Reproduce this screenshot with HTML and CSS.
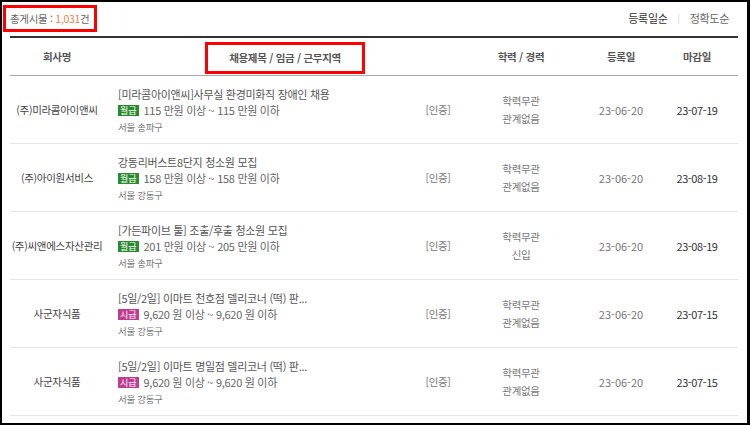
FILE: index.html
```html
<!DOCTYPE html>
<html lang="ko">
<head>
    <meta charset="UTF-8">
    <meta name="viewport" content="width=device-width, initial-scale=1.0">
    <title>채용정보</title>
    <link rel="stylesheet" href="styles.css">
</head>
<body>
    <div class="page">
        <div class="top">
            <span class="total">총게시물 : <em>1,031</em>건</span>
            <div class="sort">
                <a href="#" class="on">등록일순</a>
                <span class="bar">|</span>
                <a href="#">정확도순</a>
            </div>
        </div>

        <table class="list">
            <colgroup>
                <col class="c-company">
                <col class="c-title">
                <col class="c-cert">
                <col class="c-edu">
                <col class="c-reg">
                <col class="c-end">
            </colgroup>
            <thead>
                <tr>
                    <th>회사명</th>
                    <th colspan="2"><span class="mark">채용제목 / 임금 / 근무지역</span></th>
                    <th>학력 / 경력</th>
                    <th>등록일</th>
                    <th class="end">마감일</th>
                </tr>
            </thead>
            <tbody>
                <tr>
                    <td class="company">(주)미라콤아이앤씨</td>
                    <td class="info">
                        <div class="subject">[미라콤아이앤씨]사무실 환경미화직 장애인 채용</div>
                        <div class="pay"><span class="badge month">월급</span>115 만원 이상 ~ 115 만원 이하</div>
                        <div class="area">서울 송파구</div>
                    </td>
                    <td class="cert">[인증]</td>
                    <td class="edu">학력무관<br>관계없음</td>
                    <td class="reg">23-06-20</td>
                    <td class="end">23-07-19</td>
                </tr>
                <tr>
                    <td class="company">(주)아이원서비스</td>
                    <td class="info">
                        <div class="subject">강동리버스트8단지 청소원 모집</div>
                        <div class="pay"><span class="badge month">월급</span>158 만원 이상 ~ 158 만원 이하</div>
                        <div class="area">서울 강동구</div>
                    </td>
                    <td class="cert">[인증]</td>
                    <td class="edu">학력무관<br>관계없음</td>
                    <td class="reg">23-06-20</td>
                    <td class="end">23-08-19</td>
                </tr>
                <tr>
                    <td class="company">(주)씨앤에스자산관리</td>
                    <td class="info">
                        <div class="subject">[가든파이브 툴] 조출/후출 청소원 모집</div>
                        <div class="pay"><span class="badge month">월급</span>201 만원 이상 ~ 205 만원 이하</div>
                        <div class="area">서울 송파구</div>
                    </td>
                    <td class="cert">[인증]</td>
                    <td class="edu">학력무관<br>신입</td>
                    <td class="reg">23-06-20</td>
                    <td class="end">23-08-19</td>
                </tr>
                <tr>
                    <td class="company">사군자식품</td>
                    <td class="info">
                        <div class="subject">[5일/2일] 이마트 천호점 델리코너 (떡) 판...</div>
                        <div class="pay"><span class="badge hour">시급</span>9,620 원 이상 ~ 9,620 원 이하</div>
                        <div class="area">서울 강동구</div>
                    </td>
                    <td class="cert">[인증]</td>
                    <td class="edu">학력무관<br>관계없음</td>
                    <td class="reg">23-06-20</td>
                    <td class="end">23-07-15</td>
                </tr>
                <tr>
                    <td class="company">사군자식품</td>
                    <td class="info">
                        <div class="subject">[5일/2일] 이마트 명일점 델리코너 (떡) 판...</div>
                        <div class="pay"><span class="badge hour">시급</span>9,620 원 이상 ~ 9,620 원 이하</div>
                        <div class="area">서울 강동구</div>
                    </td>
                    <td class="cert">[인증]</td>
                    <td class="edu">학력무관<br>관계없음</td>
                    <td class="reg">23-06-20</td>
                    <td class="end">23-07-15</td>
                </tr>
            </tbody>
        </table>
    </div>
</body>
</html>
```

FILE: styles.css
```css
body {
    margin: 0;
    padding: 0;
    background-color: #fff;
}

.page {
    width: 750px;
    height: 425px;
    box-sizing: border-box;
    border: 2px solid #000;
    border-right-width: 3px;
    padding: 0 9px 0 8px;
    overflow: hidden;
    font-family: "Noto Sans CJK KR", sans-serif;
    color: #555;
}

/* top bar: total count + sort links */
.top {
    display: flex;
    justify-content: space-between;
    align-items: flex-start;
    height: 34px;
    margin-left: -7px;
    padding-top: 3px;
    box-sizing: border-box;
}

.total {
    display: inline-block;
    border: 3px solid #f00;
    padding: 0 5px 0 4px;
    height: 21px;
    line-height: 21px;
    font-size: 10.5px;
    color: #666;
    letter-spacing: -0.3px;
}

.total em {
    font-style: normal;
    color: #e8824f;
}

.sort {
    display: flex;
    align-items: center;
    gap: 10px;
    padding-top: 5px;
    margin-right: 9px;
    font-size: 11px;
    letter-spacing: -0.3px;
}

.sort a {
    color: #666;
    text-decoration: none;
}

.sort a.on {
    color: #333;
}

.sort .bar {
    color: #ccc;
    font-size: 9px;
}

/* list table */
.list {
    width: 728px;
    border-collapse: collapse;
    table-layout: fixed;
    border-top: 2px solid #333;
}

.c-company { width: 94px; }
.c-title { width: 306px; }
.c-cert { width: 56px; }
.c-edu { width: 110px; }
.c-reg { width: 90px; }
.c-end { width: 72px; }

.list th {
    height: 37px;
    padding: 0;
    font-size: 10.5px;
    font-weight: bold;
    color: #555;
    letter-spacing: -0.3px;
    border-bottom: 1px solid #aaa;
    vertical-align: middle;
}

.list th.end,
.list td.end {
    padding-right: 10px;
}

.mark {
    display: inline-block;
    border: 3px solid #f00;
    height: 26px;
    line-height: 26px;
    padding: 0 21px;
    margin-top: 3px;
}

.list td {
    height: 66px;
    padding: 0;
    border-bottom: 1px solid #e6e6e6;
    text-align: center;
    vertical-align: middle;
    font-size: 10.5px;
    color: #777;
    letter-spacing: -0.3px;
}

.list td.company {
    color: #444;
}

.list td.info {
    text-align: left;
    padding-left: 14px;
    padding-top: 1px;
}

.subject {
    color: #555;
    font-size: 11px;
    line-height: 16px;
}

.pay {
    display: flex;
    align-items: center;
    height: 17px;
    color: #666;
    font-size: 11px;
}

.badge {
    display: inline-block;
    height: 11px;
    line-height: 11px;
    padding: 0 2px;
    margin-right: 5px;
    font-size: 9px;
    color: #fff;
    letter-spacing: 0;
}

.badge.month {
    background-color: #2a8a2e;
}

.badge.hour {
    background-color: #c23a92;
}

.area {
    font-size: 9.5px;
    color: #777;
    line-height: 16px;
}

.list td.edu {
    line-height: 18px;
}

.list td.reg {
    font-size: 11px;
    letter-spacing: 0;
}

.list td.end {
    color: #333;
    font-size: 11px;
    font-weight: normal;
    letter-spacing: -0.4px;
}
```
